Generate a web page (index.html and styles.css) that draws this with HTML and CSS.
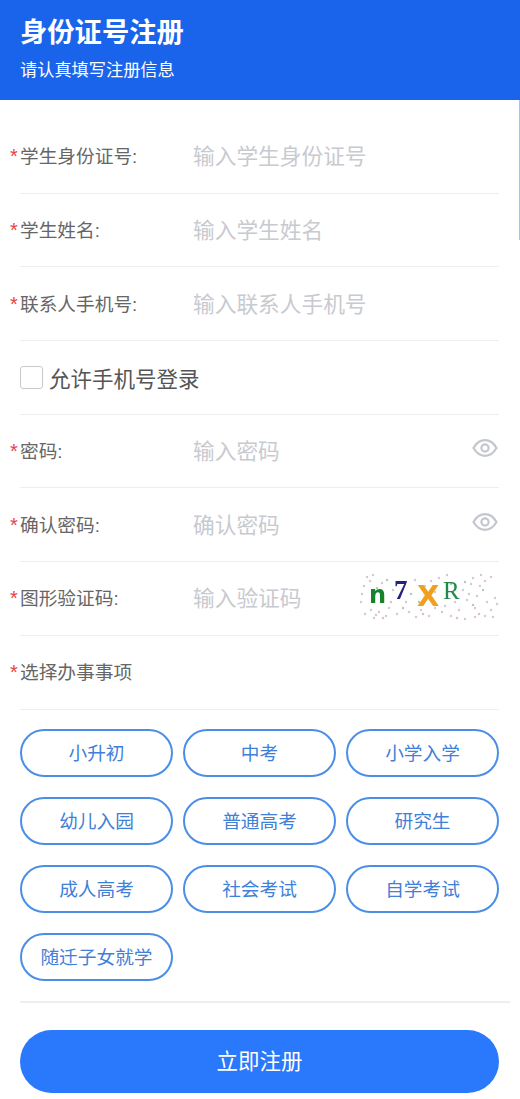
FILE: index.html
```html
<!DOCTYPE html>
<html lang="zh-CN">
<head>
    <meta charset="UTF-8">
    <meta name="viewport" content="width=device-width, initial-scale=1.0">
    <title>身份证号注册</title>
    <link rel="stylesheet" href="styles.css">
</head>
<body>

    <header class="top-bar">
        <h1>身份证号注册</h1>
        <p>请认真填写注册信息</p>
    </header>
    <div class="edge-line"></div>

    <form class="reg-form">
        <div class="row">
            <label class="row-label"><span class="star">*</span>学生身份证号:</label>
            <span class="holder">输入学生身份证号</span>
        </div>
        <div class="row">
            <label class="row-label"><span class="star">*</span>学生姓名:</label>
            <span class="holder">输入学生姓名</span>
        </div>
        <div class="row">
            <label class="row-label"><span class="star">*</span>联系人手机号:</label>
            <span class="holder">输入联系人手机号</span>
        </div>
        <div class="row">
            <span class="check-box"></span>
            <span class="check-text">允许手机号登录</span>
        </div>
        <div class="row">
            <label class="row-label"><span class="star">*</span>密码:</label>
            <span class="holder">输入密码</span>
            <svg class="eye" viewBox="0 0 26 20" fill="none" stroke="#c3c6cc" stroke-width="2.2">
                <path d="M1.5 10C4.5 4.8 8.4 2.2 13 2.2S21.500 4.800 24.500 10C21.500 15.200 17.600 17.800 13 17.800S4.500 15.200 1.500 10Z"/>
                <circle cx="13" cy="10" r="3.600"/>
            </svg>
        </div>
        <div class="row">
            <label class="row-label"><span class="star">*</span>确认密码:</label>
            <span class="holder">确认密码</span>
            <svg class="eye" viewBox="0 0 26 20" fill="none" stroke="#c3c6cc" stroke-width="2.2">
                <path d="M1.5 10C4.5 4.8 8.4 2.2 13 2.2S21.500 4.800 24.500 10C21.500 15.200 17.600 17.800 13 17.800S4.500 15.200 1.500 10Z"/>
                <circle cx="13" cy="10" r="3.600"/>
            </svg>
        </div>
        <div class="row">
            <label class="row-label"><span class="star">*</span>图形验证码:</label>
            <span class="holder">输入验证码</span>
            <div class="captcha">
                <svg class="captcha-noise" viewBox="0 0 140 52">
                    <g fill="#cfcad4">
                        <circle cx="8" cy="5" r="1.200"/><circle cx="14" cy="3" r="1.200"/><circle cx="5" cy="14" r="1.200"/>
                        <circle cx="2" cy="30" r="1.200"/><circle cx="6" cy="42" r="1.200"/><circle cx="15" cy="46" r="1.200"/>
                        <circle cx="20" cy="40" r="1.200"/><circle cx="27" cy="44" r="1.200"/><circle cx="23" cy="11" r="1.200"/>
                        <circle cx="34" cy="18" r="1.200"/><circle cx="40" cy="26" r="1.200"/><circle cx="47" cy="30" r="1.200"/>
                        <circle cx="50" cy="40" r="1.200"/><circle cx="57" cy="45" r="1.200"/><circle cx="62" cy="38" r="1.200"/>
                        <circle cx="46" cy="12" r="1.200"/><circle cx="66" cy="14" r="1.200"/><circle cx="72" cy="9" r="1.200"/>
                        <circle cx="80" cy="6" r="1.200"/><circle cx="88" cy="3" r="1.200"/><circle cx="83" cy="40" r="1.200"/>
                        <circle cx="92" cy="44" r="1.200"/><circle cx="100" cy="38" r="1.200"/><circle cx="106" cy="47" r="1.200"/>
                        <circle cx="116" cy="45" r="1.200"/><circle cx="126" cy="44" r="1.200"/><circle cx="132" cy="38" r="1.200"/>
                        <circle cx="128" cy="30" r="1.200"/><circle cx="136" cy="26" r="1.200"/><circle cx="138" cy="32" r="1.200"/>
                        <circle cx="104" cy="18" r="1.200"/><circle cx="112" cy="12" r="1.200"/><circle cx="118" cy="24" r="1.200"/>
                        <circle cx="122" cy="3" r="1.200"/><circle cx="132" cy="5" r="1.200"/><circle cx="108" cy="28" r="1.200"/>
                        <circle cx="70" cy="44" r="1.200"/><circle cx="76" cy="36" r="1.200"/><circle cx="96" cy="30" r="1.200"/>
                        <circle cx="11" cy="9" r="1.200"/><circle cx="3" cy="22" r="1.200"/><circle cx="12" cy="38" r="1.200"/>
                        <circle cx="17" cy="43" r="1.200"/><circle cx="30" cy="36" r="1.200"/><circle cx="38" cy="42" r="1.200"/>
                        <circle cx="56" cy="8" r="1.200"/><circle cx="76" cy="20" r="1.200"/><circle cx="86" cy="34" r="1.200"/>
                        <circle cx="110" cy="22" r="1.200"/><circle cx="114" cy="6" r="1.200"/><circle cx="121" cy="14" r="1.200"/>
                        <circle cx="126" cy="9" r="1.200"/><circle cx="116" cy="36" r="1.200"/><circle cx="134" cy="45" r="1.200"/>
                    </g>
                    <g fill="#a4d3ab">
                        <circle cx="18" cy="16" r="1.200"/><circle cx="52" cy="22" r="1.200"/><circle cx="92" cy="12" r="1.200"/>
                        <circle cx="114" cy="33" r="1.200"/><circle cx="60" cy="30" r="1.200"/><circle cx="124" cy="18" r="1.200"/>
                        <circle cx="28" cy="8" r="1.200"/><circle cx="44" cy="36" r="1.200"/><circle cx="106" cy="10" r="1.200"/>
                    </g>
                    <g fill="#e6b9c4">
                        <circle cx="32" cy="30" r="1.200"/><circle cx="64" cy="42" r="1.200"/><circle cx="98" cy="46" r="1.200"/>
                        <circle cx="24" cy="46" r="1.200"/><circle cx="120" cy="42" r="1.200"/>
                    </g>
                </svg>
                <span class="cap cap-n">n</span>
                <span class="cap cap-7">7</span>
                <span class="cap cap-x">X</span>
                <span class="cap cap-r">R</span>
            </div>
        </div>
        <div class="row">
            <label class="row-label"><span class="star">*</span>选择办事事项</label>
        </div>

        <div class="tag-grid">
            <span class="tag">小升初</span>
            <span class="tag">中考</span>
            <span class="tag">小学入学</span>
            <span class="tag">幼儿入园</span>
            <span class="tag">普通高考</span>
            <span class="tag">研究生</span>
            <span class="tag">成人高考</span>
            <span class="tag">社会考试</span>
            <span class="tag">自学考试</span>
            <span class="tag">随迁子女就学</span>
        </div>

        <div class="tag-line"></div>
        <button class="submit-btn" type="button">立即注册</button>
    </form>

</body>
</html>
```

FILE: styles.css
```css
html, body {
    height: 1099px;
    overflow: hidden;
}

body {
    font-family: "Liberation Sans", "Noto Sans CJK SC", sans-serif;
    margin: 0;
    padding: 0;
    background-color: #fff;
    color: #555;
    position: relative;
}

.top-bar {
    background-color: #1a64ec;
    color: #fff;
    height: 100px;
    box-sizing: border-box;
    padding: 15px 20px 0;
}

.top-bar h1 {
    margin: 0;
    font-size: 27.300px;
    line-height: 36px;
    font-weight: 700;
}

.top-bar p {
    margin: 7px 0 0;
    font-size: 17.200px;
    line-height: 24px;
}

/* thin pale line on the right side, under the header */
.edge-line {
    position: absolute;
    right: 0;
    top: 100px;
    width: 1px;
    height: 140px;
    background-color: #a9c4ec;
}

.reg-form {
    padding: 20px 21px 0 20px;
}

.row {
    display: flex;
    align-items: center;
    height: 73.7px;
    box-sizing: border-box;
    border-bottom: 1px solid #eeeeee;
}

.row-label {
    width: 173px;
    flex-shrink: 0;
    padding-bottom: 3px;
    font-size: 18.700px;
    color: #666;
}

.star {
    display: inline-block;
    width: 10px;
    margin-left: -10px;
    color: #e8434a;
    font-size: 20px;
    line-height: 1;
}

.holder {
    flex: 1;
    padding-bottom: 3px;
    font-size: 21.700px;
    color: #c8cad0;
}

.check-box {
    width: 21px;
    height: 21px;
    border: 1.500px solid #c8c9cc;
    border-radius: 3px;
    margin-right: 6px;
}

.check-text {
    font-size: 21.500px;
    color: #555;
}

.eye {
    width: 26px;
    height: 20px;
    margin: 0 1px 6px 0;
}

.captcha {
    position: relative;
    width: 140px;
    height: 52px;
    filter: blur(0.4px);
}

.captcha-noise {
    width: 140px;
    height: 52px;
    display: block;
}

.cap {
    position: absolute;
    font-weight: 700;
    line-height: 1;
}

.cap-n {
    left: 10px;
    top: 11px;
    font-family: "DejaVu Sans", sans-serif;
    font-size: 24px;
    color: #16822e;
}

.cap-7 {
    left: 35px;
    top: 5px;
    font-family: "Liberation Serif", serif;
    font-size: 27px;
    color: #23237f;
}

.cap-x {
    left: 58px;
    top: 10px;
    font-family: "DejaVu Sans", sans-serif;
    font-size: 29px;
    color: #f0a01e;
}

.cap-r {
    left: 84px;
    top: 6px;
    font-family: "Liberation Serif", serif;
    font-size: 25px;
    font-weight: 400;
    color: #1f8a4c;
}

.tag-grid {
    display: grid;
    grid-template-columns: repeat(3, 153px);
    column-gap: 10px;
    row-gap: 20px;
    padding-top: 19.700px;
}

.tag {
    height: 48px;
    box-sizing: border-box;
    padding-bottom: 3px;
    border: 2px solid #4a8ee6;
    border-radius: 24px;
    display: flex;
    align-items: center;
    justify-content: center;
    font-size: 18.700px;
    color: #3f80d8;
}

.tag-line {
    height: 2px;
    margin: 20px -11px 0 0;
    background-color: #eeeeee;
}

.submit-btn {
    display: block;
    width: 100%;
    height: 63px;
    margin-top: 27px;
    padding-bottom: 6px;
    border: none;
    border-radius: 32px;
    background-color: #2a78fb;
    color: #fff;
    font-family: inherit;
    font-size: 21.500px;
}
```
